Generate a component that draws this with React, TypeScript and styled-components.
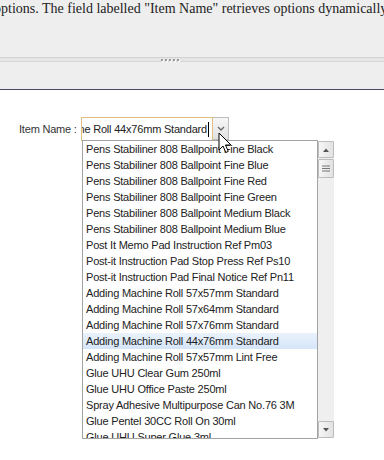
import React from "react";
import styled, { createGlobalStyle } from "styled-components";

const GlobalStyle = createGlobalStyle`
  html, body {
    margin: 0;
    padding: 0;
    background: #fff;
    font-family: "Liberation Sans", Arial, sans-serif;
  }
  body {
    min-height: 100vh;
  }
`;

// top panel (description + splitter)
const TopPanel = styled.div`
  height: 89px;
  background: #eeeeee;
  border-bottom: 1px solid #4a4a66;
  overflow: hidden;
`;

const Intro = styled.p`
  margin: 0 0 0 -6px;
  font-family: "Liberation Serif", "Times New Roman", serif;
  font-size: 14px;
  line-height: 18px;
  color: #222;
  white-space: nowrap;
`;

const Splitter = styled.div`
  margin-top: 39px;
  height: 3px;
  border-top: 1px solid #d2d2d2;
  border-bottom: 1px solid #d6d6d6;
  background: #e6e6e6;
  display: flex;
  justify-content: center;
  align-items: center;
  gap: 2px;
  padding-right: 44px;
`;

const Grip = styled.span`
  width: 2px;
  height: 2px;
  background: #9a9a9a;
  box-shadow: 1px 1px 0 #fff;
`;

// form
const FormRow = styled.div`
  display: flex;
  align-items: flex-start;
  margin-top: 27px;
  padding-left: 19px;
`;

const Label = styled.label`
  width: 62px;
  height: 24px;
  line-height: 24px;
  font-size: 11px;
  letter-spacing: -0.2px;
  color: #333;
`;

const Combo = styled.div`
  position: relative;
  display: flex;
  flex-direction: column;
`;

const Field = styled.div`
  display: flex;
  align-items: flex-start;
`;

const InputBox = styled.div`
  width: 127px;
  height: 22px;
  border: 1px solid #e2bf7e;
  padding: 0 3px 0 0;
  display: flex;
  justify-content: flex-end;
  align-items: center;
  overflow: hidden;
  background: #fff;
  font-size: 11px;
  letter-spacing: -0.2px;
  color: #222;
  white-space: nowrap;
`;

const Caret = styled.span`
  width: 1px;
  height: 15px;
  margin-left: 1px;
  background: #000;
  flex: none;
`;

const TriggerButton = styled.div`
  width: 15px;
  height: 21px;
  border: 1px solid #bdbdbd;
  border-left: none;
  background: linear-gradient(#f7f7f7, #e1e1e1);
  display: flex;
  align-items: center;
  justify-content: center;
`;

const Dropdown = styled.div`
  margin: -1px 0 0 1px;
  display: flex;
  align-items: flex-start;
`;

const ListPane = styled.ul`
  list-style: none;
  margin: 0;
  padding: 0;
  width: 234px;
  height: 297px;
  border: 1px solid #a3a3a3;
  background: #fff;
  overflow: hidden;
`;

const Item = styled.li<{ $active?: boolean }>`
  height: 16px;
  line-height: 16px;
  padding-left: 3px;
  font-size: 11px;
  letter-spacing: -0.2px;
  color: #222;
  white-space: nowrap;
  background: ${({ $active }) =>
    $active ? "linear-gradient(#e9f2fc, #d5e5f8)" : "transparent"};
`;

const Scrollbar = styled.div`
  margin-top: 1px;
  width: 16px;
  height: 297px;
  background: #efefef;
  display: flex;
  flex-direction: column;
  justify-content: space-between;
`;

const ScrollTop = styled.div`
  display: flex;
  flex-direction: column;
  gap: 1px;
`;

const ScrollButton = styled.div<{ $tall?: boolean }>`
  width: 14px;
  height: ${({ $tall }) => ($tall ? "17px" : "15px")};
  border: 1px solid #bcbcbc;
  border-radius: 1px;
  background: linear-gradient(90deg, #f6f6f6, #e2e2e2);
  display: flex;
  align-items: center;
  justify-content: center;
`;

const Pointer = styled.svg`
  position: absolute;
  left: 137px;
  top: 15px;
  pointer-events: none;
`;

const items = [
  "Pens Stabiliner 808 Ballpoint Fine Black",
  "Pens Stabiliner 808 Ballpoint Fine Blue",
  "Pens Stabiliner 808 Ballpoint Fine Red",
  "Pens Stabiliner 808 Ballpoint Fine Green",
  "Pens Stabiliner 808 Ballpoint Medium Black",
  "Pens Stabiliner 808 Ballpoint Medium Blue",
  "Post It Memo Pad Instruction Ref Pm03",
  "Post-it Instruction Pad Stop Press Ref Ps10",
  "Post-it Instruction Pad Final Notice Ref Pn11",
  "Adding Machine Roll 57x57mm Standard",
  "Adding Machine Roll 57x64mm Standard",
  "Adding Machine Roll 57x76mm Standard",
  "Adding Machine Roll 44x76mm Standard",
  "Adding Machine Roll 57x57mm Lint Free",
  "Glue UHU Clear Gum 250ml",
  "Glue UHU Office Paste 250ml",
  "Spray Adhesive Multipurpose Can No.76 3M",
  "Glue Pentel 30CC Roll On 30ml",
  "Glue UHU Super Glue 3ml",
];

const selected = "Adding Machine Roll 44x76mm Standard";

const App: React.FC = () => {
  return (
    <>
      <GlobalStyle />
      <TopPanel>
        <Intro>
          options. The field labelled "Item Name" retrieves options dynamically
          from the server.
        </Intro>
        <Splitter>
          <Grip />
          <Grip />
          <Grip />
          <Grip />
          <Grip />
        </Splitter>
      </TopPanel>

      <FormRow>
        <Label>Item Name :</Label>
        <Combo>
          <Field>
            <InputBox>
              <span>{selected}</span>
              <Caret />
            </InputBox>
            <TriggerButton>
              <svg width="8" height="5" viewBox="0 0 8 5">
                <path d="M1 1 L4 4 L7 1" fill="none" stroke="#6a6a6a" strokeWidth="1.4" />
              </svg>
            </TriggerButton>
          </Field>

          <Dropdown>
            <ListPane>
              {items.map((it) => (
                <Item key={it} $active={it === selected}>
                  {it}
                </Item>
              ))}
            </ListPane>
            <Scrollbar>
              <ScrollTop>
                <ScrollButton>
                  <svg width="6" height="4" viewBox="0 0 6 4">
                    <path d="M0 4 L3 0.5 L6 4 Z" fill="#555" />
                  </svg>
                </ScrollButton>
                <ScrollButton $tall>
                  <svg width="8" height="7" viewBox="0 0 8 7">
                    <path d="M0 1 H8 M0 3.5 H8 M0 6 H8" stroke="#777" strokeWidth="1" />
                  </svg>
                </ScrollButton>
              </ScrollTop>
              <ScrollButton>
                <svg width="6" height="4" viewBox="0 0 6 4">
                  <path d="M0 0 L3 3.5 L6 0 Z" fill="#555" />
                </svg>
              </ScrollButton>
            </Scrollbar>
          </Dropdown>

          <Pointer width="14" height="22" viewBox="0 0 14 22">
            <path
              d="M1 1 L1 18 L5 14 L7.8 20.5 L10.3 19.4 L7.5 13 L13 13 Z"
              fill="#fff"
              stroke="#000"
              strokeWidth="1"
              strokeLinejoin="miter"
            />
          </Pointer>
        </Combo>
      </FormRow>
    </>
  );
};

export default App;
